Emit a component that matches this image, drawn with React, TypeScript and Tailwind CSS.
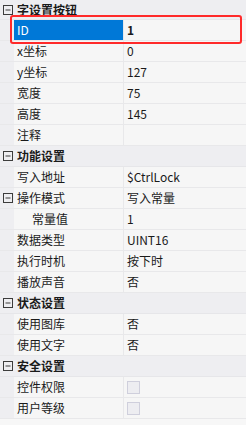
import * as React from "react";

type Row =
  | { kind: "cat"; label: string }
  | { kind: "prop"; label: string; value?: string; indent?: boolean; expand?: boolean; check?: boolean; selected?: boolean };

const rows: Row[] = [
  { kind: "cat", label: "字设置按钮" },
  { kind: "prop", label: "ID", value: "1", selected: true },
  { kind: "prop", label: "x坐标", value: "0" },
  { kind: "prop", label: "y坐标", value: "127" },
  { kind: "prop", label: "宽度", value: "75" },
  { kind: "prop", label: "高度", value: "145" },
  { kind: "prop", label: "注释", value: "" },
  { kind: "cat", label: "功能设置" },
  { kind: "prop", label: "写入地址", value: "$CtrlLock" },
  { kind: "prop", label: "操作模式", value: "写入常量", expand: true },
  { kind: "prop", label: "常量值", value: "1", indent: true },
  { kind: "prop", label: "数据类型", value: "UINT16" },
  { kind: "prop", label: "执行时机", value: "按下时" },
  { kind: "prop", label: "播放声音", value: "否" },
  { kind: "cat", label: "状态设置" },
  { kind: "prop", label: "使用图库", value: "否" },
  { kind: "prop", label: "使用文字", value: "否" },
  { kind: "cat", label: "安全设置" },
  { kind: "prop", label: "控件权限", check: true },
  { kind: "prop", label: "用户等级", check: true },
];

function Minus() {
  return (
    <svg width="10" height="10" viewBox="0 0 10 10" className="block">
      <rect x="0.5" y="0.5" width="9" height="9" fill="none" stroke="#3c3c3c" />
      <line x1="2.5" y1="5" x2="7.5" y2="5" stroke="#3c3c3c" />
    </svg>
  );
}

export default function App() {
  return (
    <div
      className="relative w-[246px] h-[425px] bg-[#f7f7f7] overflow-hidden text-[12px] text-[#1a1a1a]"
      style={{ fontFamily: '"Noto Sans CJK SC", "Microsoft YaHei", sans-serif' }}
    >
      <div className="flex flex-col">
        {rows.map((r, i) =>
          r.kind === "cat" ? (
            <div
              key={i}
              className={`flex items-center bg-[#eeeef1] border-b border-[#e6e6e9] ${i === 0 ? "h-[20px]" : "h-[21px]"}`}
            >
              <div className="w-[14px] flex justify-center pl-[1px]">
                <Minus />
              </div>
              <span className="pl-[3px] font-bold leading-none">{r.label}</span>
            </div>
          ) : (
            <div key={i} className="flex h-[21px] border-b border-[#e8e8ea]">
              <div className="w-[14px] shrink-0 bg-[#eeeef1] flex items-center justify-center pl-[1px]">
                {r.expand && <Minus />}
              </div>
              <div
                className={`w-[109px] shrink-0 flex items-center leading-none ${
                  r.indent ? "pl-[18px]" : "pl-[3px]"
                } ${r.selected ? "bg-[#0078d7] text-white" : "bg-[#f6f6f6]"}`}
              >
                {r.label}
              </div>
              <div className="w-px bg-[#e8e8ea]" />
              <div
                className={`flex-1 flex items-center pl-[3px] bg-[#f6f6f6] leading-none ${
                  r.selected ? "font-bold" : ""
                }`}
              >
                {r.check ? (
                  <span className="block w-[13px] h-[13px] border border-[#cfcfdc] bg-[#ededf1]" />
                ) : (
                  r.value
                )}
              </div>
            </div>
          )
        )}
      </div>
      <div className="absolute left-[10px] top-[15px] w-[232px] h-[29px] rounded-[3px] border-[2.5px] border-[#ff2a2a]" />
    </div>
  );
}
